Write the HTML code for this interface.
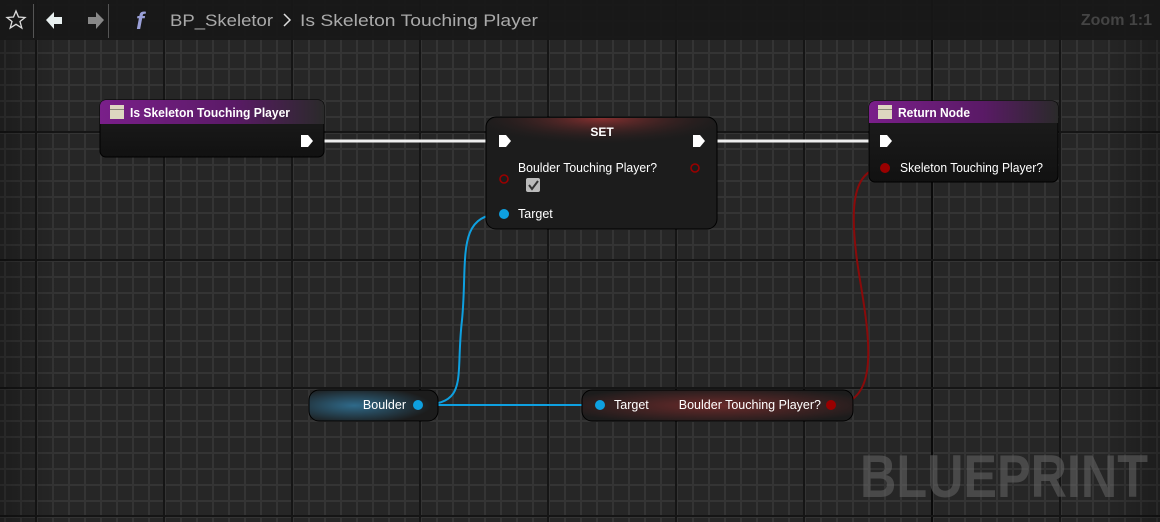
<!DOCTYPE html>
<html><head><style>
body{margin:0;width:1160px;height:522px;overflow:hidden;background:#262626;font-family:"Liberation Sans",sans-serif}
svg{position:absolute;left:0;top:0}
text{font-family:"Liberation Sans",sans-serif}
</style></head><body>
<svg width="1160" height="522" viewBox="0 0 1160 522">
<defs>
<pattern id="minor" x="4" y="4" width="16" height="16" patternUnits="userSpaceOnUse">
<rect width="16" height="16" fill="#262626"/><rect width="16" height="2" fill="#343434"/><rect width="2" height="16" fill="#343434"/>
</pattern>
<linearGradient id="vign" x1="0" x2="1"><stop offset="0" stop-color="#000" stop-opacity=".25"/><stop offset=".05" stop-color="#000" stop-opacity="0"/><stop offset=".95" stop-color="#000" stop-opacity="0"/><stop offset="1" stop-color="#000" stop-opacity=".25"/></linearGradient>
<linearGradient id="purp" x1="0" x2="1"><stop offset="0" stop-color="#7a1f8a"/><stop offset=".6" stop-color="#5a1a66"/><stop offset="1" stop-color="#2a2a2a"/></linearGradient>
<linearGradient id="body" x1="0" y1="0" x2="0" y2="1"><stop offset="0" stop-color="#1e1e1e"/><stop offset="1" stop-color="#111"/></linearGradient>
<radialGradient id="setred" cx=".5" cy="0" r=".6"><stop offset="0" stop-color="#8a3030"/><stop offset="1" stop-color="#1e1e1e" stop-opacity="0"/></radialGradient>
<radialGradient id="blue" cx=".35" cy=".5" r=".6"><stop offset="0" stop-color="#2f6a8a"/><stop offset="1" stop-color="#1c1c1c"/></radialGradient>
<radialGradient id="red2" cx=".5" cy=".5" r=".6"><stop offset="0" stop-color="#6a2a2a"/><stop offset="1" stop-color="#1c1c1c"/></radialGradient>
</defs>
<rect width="1160" height="522" fill="url(#minor)"/>
<g fill="#151515">
<rect x="35" y="0" width="2" height="522"/><rect x="163" y="0" width="2" height="522"/><rect x="291" y="0" width="2" height="522"/><rect x="419" y="0" width="2" height="522"/><rect x="547" y="0" width="2" height="522"/><rect x="675" y="0" width="2" height="522"/><rect x="803" y="0" width="2" height="522"/><rect x="931" y="0" width="2" height="522" fill="#0a0a0a"/><rect x="1059" y="0" width="2" height="522"/>
<rect x="0" y="131" width="1160" height="2"/><rect x="0" y="259" width="1160" height="2"/><rect x="0" y="387" width="1160" height="2"/><rect x="0" y="515" width="1160" height="2"/>
</g>
<rect width="1160" height="522" fill="url(#vign)"/>
<!-- toolbar -->
<rect width="1160" height="40" fill="#181818" opacity=".93"/>
<path d="M16 11 L18.5 17 L25 17.5 L20 21.5 L21.8 28 L16 24.3 L10.2 28 L12 21.5 L7 17.5 L13.5 17 Z" fill="none" stroke="#ddd" stroke-width="1.3"/>
<rect x="33" y="4" width="1" height="34" fill="#555"/>
<path d="M46 20 L54 12 L54 17 L62 17 L62 24 L54 24 L54 29 Z" fill="#e8f0f0"/>
<path d="M104 20 L96 12 L96 17 L88 17 L88 24 L96 24 L96 29 Z" fill="#888"/>
<rect x="108" y="4" width="1" height="34" fill="#555"/>
<text x="136" y="29" font-family="Liberation Serif" font-style="italic" font-weight="bold" font-size="24" fill="#9aa0d8">f</text>
<text x="170" y="26" font-size="17" fill="#aaa" textLength="103" lengthAdjust="spacingAndGlyphs">BP_Skeletor</text>
<path d="M284 14 L290 20 L284 26" fill="none" stroke="#ddd" stroke-width="1.5"/>
<text x="300" y="26" font-size="17" fill="#aaa" textLength="238" lengthAdjust="spacingAndGlyphs">Is Skeleton Touching Player</text>
<text x="1152" y="25" font-size="16" font-weight="bold" fill="#444" text-anchor="end">Zoom 1:1</text>
<text x="1148" y="497" font-size="60" font-weight="bold" fill="#666" fill-opacity=".55" text-anchor="end" textLength="288" lengthAdjust="spacingAndGlyphs">BLUEPRINT</text>
<!-- wires -->
<path d="M318 141 H494" stroke="#eee" stroke-width="3"/>
<path d="M710 141 H876" stroke="#eee" stroke-width="3"/>
<path d="M418 405 C470 405,455 380,462 320 C468 260,455 214,502 214" stroke="#0ea0e0" stroke-width="2" fill="none"/>
<path d="M418 405 H598" stroke="#0ea0e0" stroke-width="2"/>
<path d="M832 405 C880 405,870 340,860 280 C850 220,848 168,884 168" stroke="#8a0a0a" stroke-width="2" fill="none"/>
<!-- node 1 -->
<rect x="100" y="100" width="224" height="57" rx="6" fill="url(#body)" stroke="#000"/>
<path d="M106 100 H318 a6 6 0 0 1 6 6 V124 H100 V106 a6 6 0 0 1 6 -6Z" fill="url(#purp)"/>
<rect x="110" y="105" width="14" height="14" fill="#ddd6c0"/><rect x="110" y="109" width="14" height="1" fill="#887"/>
<text x="130" y="117" font-size="13" font-weight="bold" fill="#fff" textLength="160" lengthAdjust="spacingAndGlyphs">Is Skeleton Touching Player</text>
<path d="M301 135 H308 L313 141 L308 147 H301Z" fill="#fff"/>
<!-- SET -->
<rect x="486" y="117" width="231" height="112" rx="10" fill="#1c1c1c" stroke="#000"/>
<rect x="487" y="118" width="229" height="45" rx="10" fill="url(#setred)"/>
<text x="602" y="136" font-size="12" font-weight="bold" fill="#fff" text-anchor="middle">SET</text>
<path d="M499 135 H506 L511 141 L506 147 H499Z" fill="#fff"/>
<path d="M693 135 H700 L705 141 L700 147 H693Z" fill="#fff"/>
<text x="518" y="172" font-size="12.5" fill="#fff" textLength="139" lengthAdjust="spacingAndGlyphs">Boulder Touching Player?</text>
<circle cx="504" cy="179" r="4" fill="none" stroke="#900" stroke-width="1.6"/>
<circle cx="695" cy="168" r="4" fill="none" stroke="#900" stroke-width="1.6"/>
<rect x="526" y="178" width="14" height="14" rx="2" fill="#bbb"/><path d="M529 185 L532 189 L538 181" stroke="#333" stroke-width="2" fill="none"/>
<circle cx="504" cy="214" r="5" fill="#0ea0e0"/>
<text x="518" y="218" font-size="12.5" fill="#fff">Target</text>
<!-- return -->
<rect x="869" y="101" width="189" height="81" rx="6" fill="url(#body)" stroke="#000"/>
<path d="M875 101 H1052 a6 6 0 0 1 6 6 V123 H869 V107 a6 6 0 0 1 6 -6Z" fill="url(#purp)"/>
<rect x="878" y="105" width="14" height="14" fill="#ddd6c0"/><rect x="878" y="109" width="14" height="1" fill="#887"/>
<text x="898" y="117" font-size="13" font-weight="bold" fill="#fff" textLength="72" lengthAdjust="spacingAndGlyphs">Return Node</text>
<path d="M880 135 H887 L892 141 L887 147 H880Z" fill="#fff"/>
<circle cx="885" cy="168" r="5" fill="#900"/>
<text x="900" y="172" font-size="12.5" fill="#fff" textLength="143" lengthAdjust="spacingAndGlyphs">Skeleton Touching Player?</text>
<!-- Boulder -->
<rect x="309" y="390" width="129" height="31" rx="10" fill="url(#blue)" stroke="#000"/>
<text x="406" y="409" font-size="12.5" fill="#fff" text-anchor="end">Boulder</text>
<circle cx="418" cy="405" r="5" fill="#0ea0e0"/>
<!-- getter -->
<rect x="582" y="390" width="271" height="31" rx="10" fill="url(#red2)" stroke="#000"/>
<circle cx="600" cy="405" r="5" fill="#0ea0e0"/>
<text x="614" y="409" font-size="12.5" fill="#fff">Target</text>
<text x="821" y="409" font-size="12.5" fill="#fff" text-anchor="end">Boulder Touching Player?</text>
<circle cx="831" cy="405" r="5" fill="#900"/>
</svg>
</body></html>
